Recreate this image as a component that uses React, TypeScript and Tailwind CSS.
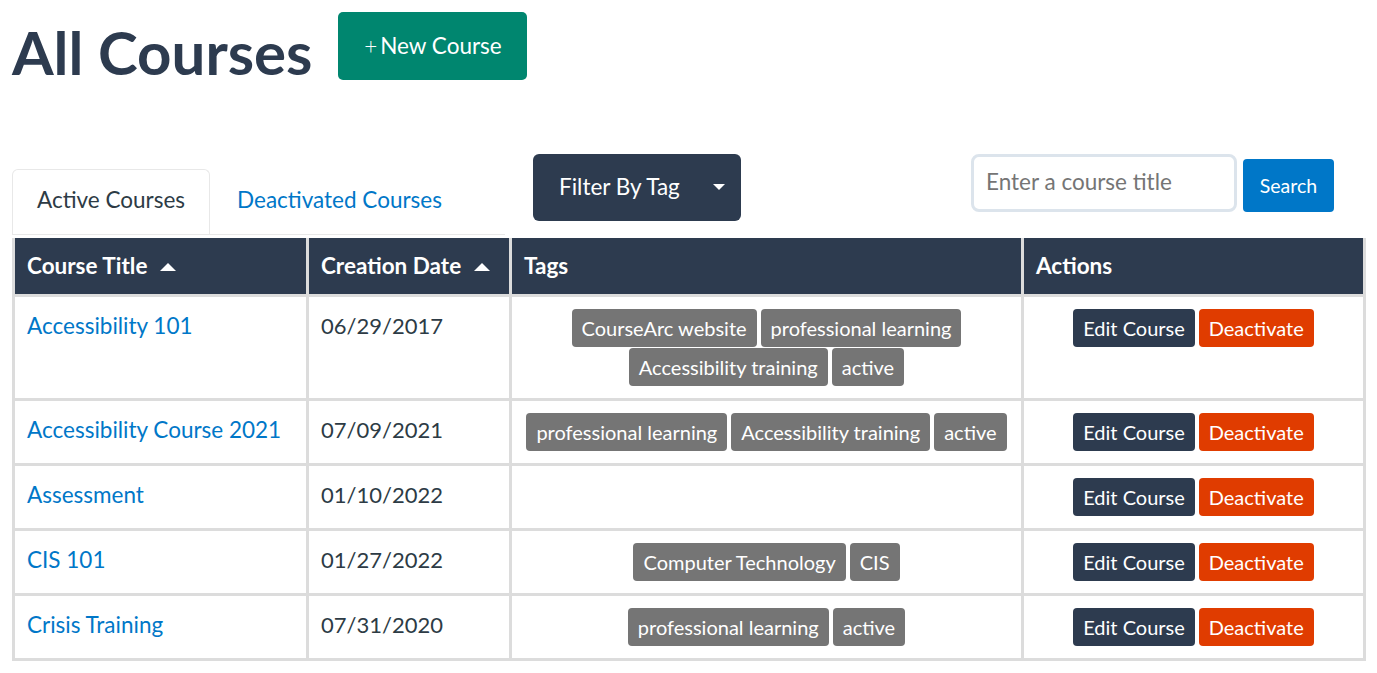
import React from 'react';

// Daten für die Kursliste
type Course = {
    title: string;
    date: string;
    tags: string[];
};

const courses: Course[] = [
    { title: 'Accessibility 101', date: '06/29/2017', tags: ['CourseArc website', 'professional learning', 'Accessibility training', 'active'] },
    { title: 'Accessibility Course 2021', date: '07/09/2021', tags: ['professional learning', 'Accessibility training', 'active'] },
    { title: 'Assessment', date: '01/10/2022', tags: [] },
    { title: 'CIS 101', date: '01/27/2022', tags: ['Computer Technology', 'CIS'] },
    { title: 'Crisis Training', date: '07/31/2020', tags: ['professional learning', 'active'] },
];

const SortUp = () => (
    <svg width="18" height="10" viewBox="0 0 18 10" className="inline-block ml-3 mb-[3px]">
        <path d="M1 9 L9 1 L17 9 Z" fill="#ffffff" />
    </svg>
);

const App: React.FC = () => {
    return (
        <div className="min-h-screen bg-white px-3 pt-3 font-['Lato','Liberation_Sans',sans-serif] text-[#2d3b45]">
            {/* Kopfzeile */}
            <div className="flex items-start h-[68px]">
                <h1 className="mt-[10px] text-[60px] leading-[60px] font-bold text-[#2d3b4f]">All Courses</h1>
                <button className="ml-[26px] h-[68px] w-[189px] rounded-[5px] bg-[#00866f] text-white text-[22.5px] flex items-center justify-center">
                    <span className="font-light mr-[3px]">+</span>New Course
                </button>
            </div>

            {/* Tabs, Filter, Suche */}
            <div className="flex items-start mt-[74px]">
                <div className="mt-[15px] w-[493px] flex border-b border-[#e8e8e8]">
                    <div className="h-[65px] pb-1 px-6 flex items-center bg-white border border-[#e8e8e8] border-b-0 rounded-t-[6px] text-[22.5px] text-[#2d3b45] -mb-px">
                        Active Courses
                    </div>
                    <div className="h-[65px] pb-1 ml-[3px] px-6 flex items-center text-[22.5px] text-[#0077c8]">
                        Deactivated Courses
                    </div>
                </div>
                <button className="ml-[28px] h-[67px] w-[208px] pl-[26px] pr-[16px] pb-[2px] rounded-[6px] bg-[#2d3b4f] text-white text-[22.5px] flex items-center justify-between">
                    <span>Filter By Tag</span>
                    <svg width="12" height="6" viewBox="0 0 12 6">
                        <path d="M0 0 L12 0 L6 6 Z" fill="#ffffff" />
                    </svg>
                </button>
                <div className="ml-[230px] flex items-end gap-[6px]">
                    <input
                        placeholder="Enter a course title"
                        className="w-[266px] h-[58px] px-3 pb-1 border-[3px] border-[#dce4ec] rounded-[8px] text-[22.5px] placeholder:text-[#757575] outline-none"
                    />
                    <button className="h-[53px] w-[91px] rounded-[4px] bg-[#0077c8] text-white text-[19.5px]">Search</button>
                </div>
            </div>

            {/* Tabelle */}
            <table className="mt-[3px] w-[1351px] table-fixed border-collapse">
                <colgroup>
                    <col className="w-[294px]" />
                    <col className="w-[203px]" />
                    <col className="w-[512px]" />
                    <col className="w-[342px]" />
                </colgroup>
                <thead>
                    <tr className="bg-[#2d3b4f] text-white text-[22.5px] font-bold text-left">
                        <th className="h-[57px] px-3 border-[3px] border-t-0 border-[#dcdcdc] font-bold">Course Title<SortUp /></th>
                        <th className="px-3 border-[3px] border-t-0 border-[#dcdcdc] font-bold">Creation Date<SortUp /></th>
                        <th className="px-3 border-[3px] border-t-0 border-[#dcdcdc] font-bold">Tags</th>
                        <th className="px-3 border-[3px] border-t-0 border-[#dcdcdc] font-bold">Actions</th>
                    </tr>
                </thead>
                <tbody>
                    {courses.map((c) => (
                        <tr key={c.title} className="align-top text-[22.5px] leading-[33px]">
                            <td className="px-3 py-3 border-[3px] border-[#dcdcdc]">
                                <a className="text-[#0077c8]">{c.title}</a>
                            </td>
                            <td className="px-3 py-3 border-[3px] border-[#dcdcdc] text-[#2d3b45] text-[22px]">{c.date}</td>
                            <td className="px-3 py-3 border-[3px] border-[#dcdcdc]">
                                <div className="flex flex-wrap justify-center gap-x-1 gap-y-px min-h-[38px]">
                                    {c.tags.map((t, i) => (
                                        <span key={i} className="h-[38px] px-[10px] flex items-center rounded-[4px] bg-[#757575] text-white text-[20px] leading-none">
                                            {t}
                                        </span>
                                    ))}
                                </div>
                            </td>
                            <td className="px-3 py-3 border-[3px] border-[#dcdcdc]">
                                <div className="flex justify-center gap-1">
                                    <button className="h-[38px] px-[10px] rounded-[4px] bg-[#2d3b4f] text-white text-[20px] leading-none">Edit Course</button>
                                    <button className="h-[38px] px-[10px] rounded-[4px] bg-[#e03c00] text-white text-[20px] leading-none">Deactivate</button>
                                </div>
                            </td>
                        </tr>
                    ))}
                </tbody>
            </table>
        </div>
    );
};

export default App;
